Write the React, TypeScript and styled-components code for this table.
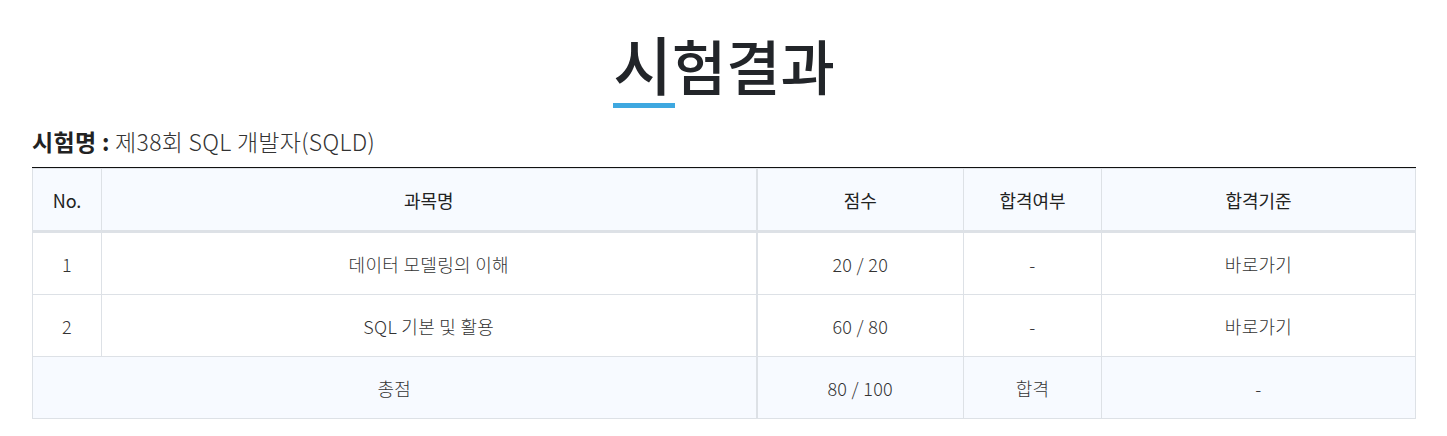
import React from "react";
import styled, { createGlobalStyle } from "styled-components";

const Global = createGlobalStyle`
  html, body { margin: 0; padding: 0; background: #fff; }
  body { font-family: "Noto Sans CJK KR", "Noto Sans", sans-serif; color: #222; }
`;

const Page = styled.div`
  padding: 0 31px 0 32px;
`;

const TitleWrap = styled.div`
  display: flex;
  justify-content: center;
  padding-top: 22px;
`;

const Title = styled.h2`
  margin: 0;
  font-size: 59px;
  font-weight: 500;
  color: #222529;
  line-height: 80px;
  letter-spacing: 0;
`;

const FirstChar = styled.span`
  position: relative;
  display: inline-block;
  font-size: 64px;
  &::after {
    content: "";
    position: absolute;
    left: 0;
    width: 62px;
    bottom: -6px;
    height: 5px;
    background: #3ea8e0;
  }
`;

const ExamName = styled.p`
  margin: 21px 0 0;
  font-size: 23px;
  line-height: 30px;
  font-weight: 300;
  letter-spacing: 0.3px;
  color: #333;
`;

const ExamLabel = styled.strong`
  font-weight: 700;
  color: #222;
`;

const TableWrap = styled.div`
  margin-top: 11px;
  border-top: 1px solid #111;
`;

const Table = styled.table`
  width: 100%;
  border-collapse: collapse;
  table-layout: fixed;
  font-size: 18px;
`;

const Th = styled.th<{ $thick?: boolean }>`
  background: #f7faff;
  border: 1px solid #dde1e6;
  border-bottom: 3px solid #dde1e6;
  ${(p) => (p.$thick ? "border-left: 2px solid #dde1e6;" : "")}
  font-weight: 400;
  color: #222;
  height: 61px;
  padding: 0 10px;
  text-align: center;
`;

const Td = styled.td<{ $thick?: boolean; $total?: boolean }>`
  border: 1px solid #dde1e6;
  ${(p) => (p.$thick ? "border-left: 2px solid #dde1e6;" : "")}
  background: ${(p) => (p.$total ? "#f7faff" : "#fff")};
  color: #333;
  height: 61px;
  padding: 0 10px;
  text-align: center;
  font-weight: 300;
  letter-spacing: 0.3px;
`;

const rows = [
  { no: "1", name: "데이터 모델링의 이해", score: "20 / 20", pass: "-", std: "바로가기" },
  { no: "2", name: "SQL 기본 및 활용", score: "60 / 80", pass: "-", std: "바로가기" },
];

export default function App() {
  return (
    <Page>
      <Global />
      <TitleWrap>
        <Title>
          <FirstChar>시</FirstChar>험결과
        </Title>
      </TitleWrap>
      <ExamName>
        <ExamLabel>시험명 :</ExamLabel> 제38회 SQL 개발자(SQLD)
      </ExamName>
      <TableWrap>
        <Table>
          <colgroup>
            <col style={{ width: 69 }} />
            <col />
            <col style={{ width: 207 }} />
            <col style={{ width: 138 }} />
            <col style={{ width: 314 }} />
          </colgroup>
          <thead>
            <tr>
              <Th>No.</Th>
              <Th>과목명</Th>
              <Th $thick>점수</Th>
              <Th>합격여부</Th>
              <Th>합격기준</Th>
            </tr>
          </thead>
          <tbody>
            {rows.map((r) => (
              <tr key={r.no}>
                <Td>{r.no}</Td>
                <Td>{r.name}</Td>
                <Td $thick>{r.score}</Td>
                <Td>{r.pass}</Td>
                <Td>{r.std}</Td>
              </tr>
            ))}
            <tr>
              <Td $total colSpan={2}>총점</Td>
              <Td $total $thick>80 / 100</Td>
              <Td $total>합격</Td>
              <Td $total>-</Td>
            </tr>
          </tbody>
        </Table>
      </TableWrap>
    </Page>
  );
}
